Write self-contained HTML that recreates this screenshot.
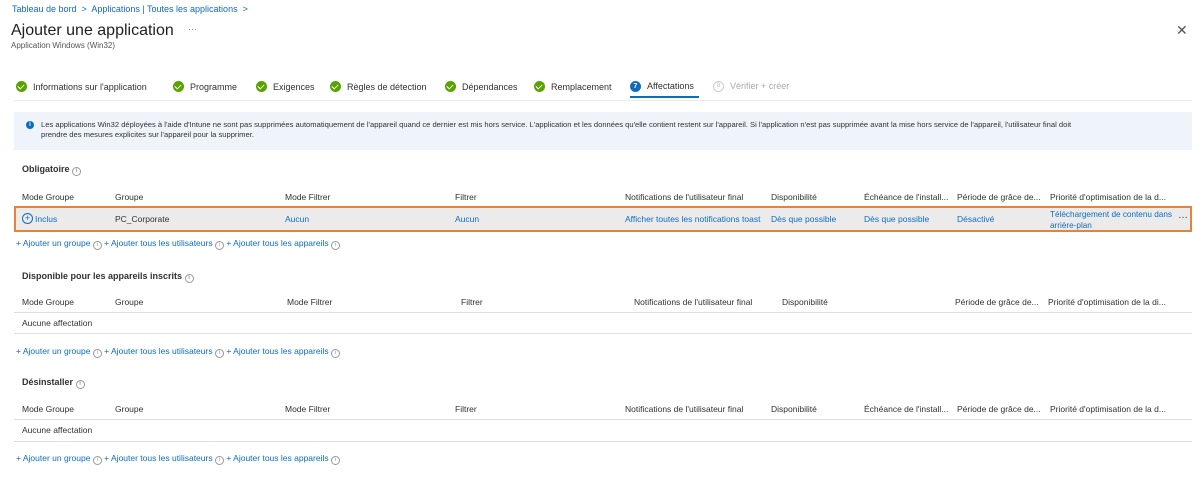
<!DOCTYPE html>
<html><head><meta charset="utf-8"><style>
body{margin:0;width:1200px;height:478px;background:#fff;font-family:"Liberation Sans",sans-serif;color:#323130;position:relative;overflow:hidden}
.a{position:absolute;white-space:nowrap}
.s{font-size:9px}
.hd{font-size:8.5px;color:#323130}
.l{color:#0f6cbd}
.ck{display:inline-block;width:11px;height:11px;border-radius:50%;background:#57a300;vertical-align:-2px;margin-right:6px;position:relative}
.ck:after{content:"";position:absolute;left:3px;top:2px;width:3px;height:5px;border:solid #fff;border-width:0 1.5px 1.5px 0;transform:rotate(45deg)}
.n{position:absolute;border-radius:50%;text-align:center;font-weight:bold}
.i{display:inline-block;width:7px;height:7px;border:1px solid #999;border-radius:50%;font-size:6px;line-height:7px;text-align:center;color:#999;vertical-align:0}
.hr{position:absolute;left:14px;width:1178px;height:1px;background:#e1dfdd}
</style></head><body>
<div class="a s l" style="left:12px;top:4px">Tableau de bord &nbsp;&gt;&nbsp; Applications | Toutes les applications &nbsp;&gt;</div>
<div class="a" style="left:11px;top:22px;font-size:16px;color:#201f1e">Ajouter une application</div>
<div class="a" style="left:188px;top:24px;font-size:9px;color:#888">···</div>
<div class="a" style="left:11px;top:41px;font-size:8px;color:#555">Application Windows (Win32)</div>
<div class="a" style="left:1176px;top:22px;font-size:14px;color:#555">✕</div>

<div class="a s" style="left:16px;top:81px"><span class="ck"></span>Informations sur l'application</div>
<div class="a s" style="left:173px;top:81px"><span class="ck"></span>Programme</div>
<div class="a s" style="left:256px;top:81px"><span class="ck"></span>Exigences</div>
<div class="a s" style="left:330px;top:81px"><span class="ck"></span>Règles de détection</div>
<div class="a s" style="left:445px;top:81px"><span class="ck"></span>Dépendances</div>
<div class="a s" style="left:534px;top:81px"><span class="ck"></span>Remplacement</div>
<div class="n" style="left:630px;top:81px;width:11px;height:11px;background:#0f6cbd;color:#fff;font-size:7px;line-height:11px">7</div>
<div class="a s" style="left:647px;top:81px">Affectations</div>
<div class="a" style="left:630px;top:96px;width:69px;height:2px;background:#0f6cbd"></div>
<div class="n" style="left:713px;top:81px;width:9px;height:9px;border:1px solid #ccc;color:#bbb;font-size:6px;line-height:9px;font-weight:normal">8</div>
<div class="a s" style="left:730px;top:81px;color:#aaa">Vérifier + créer</div>
<div class="hr" style="top:100px;background:#edebe9"></div>

<div class="a" style="left:14px;top:112px;width:1178px;height:38px;background:#eff4fb"></div>
<div class="a" style="left:26px;top:121px;width:8px;height:8px;border-radius:50%;background:#0f6cbd;color:#fff;font-size:6px;line-height:8px;text-align:center;font-weight:bold">i</div>
<div class="a" style="left:41px;top:120px;font-size:7.6px;line-height:10px;color:#323130">Les applications Win32 déployées à l'aide d'Intune ne sont pas supprimées automatiquement de l'appareil quand ce dernier est mis hors service. L'application et les données qu'elle contient restent sur l'appareil. Si l'application n'est pas supprimée avant la mise hors service de l'appareil, l'utilisateur final doit<br>prendre des mesures explicites sur l'appareil pour la supprimer.</div>

<div class="a" style="left:22px;top:164px;font-size:9px;font-weight:bold">Obligatoire <span class="i">i</span></div>
<div class="a hd" style="left:22px;top:192px">Mode Groupe</div>
<div class="a hd" style="left:115px;top:192px">Groupe</div>
<div class="a hd" style="left:285px;top:192px">Mode Filtrer</div>
<div class="a hd" style="left:455px;top:192px">Filtrer</div>
<div class="a hd" style="left:625px;top:192px">Notifications de l'utilisateur final</div>
<div class="a hd" style="left:771px;top:192px">Disponibilité</div>
<div class="a hd" style="left:864px;top:192px">Échéance de l'install...</div>
<div class="a hd" style="left:957px;top:192px">Période de grâce de...</div>
<div class="a hd" style="left:1050px;top:192px">Priorité d'optimisation de la d...</div>
<div class="a" style="left:14px;top:206px;width:1174px;height:22px;background:#ecebeb;border:2px solid #e8823a"></div>
<div class="n" style="left:22px;top:213px;width:9px;height:9px;border:1px solid #0f6cbd;color:#0f6cbd;font-size:9px;line-height:9px;font-weight:normal">+</div>
<div class="a hd l" style="left:35px;top:214px">Inclus</div>
<div class="a hd" style="left:115px;top:214px">PC_Corporate</div>
<div class="a hd l" style="left:285px;top:214px">Aucun</div>
<div class="a hd l" style="left:455px;top:214px">Aucun</div>
<div class="a hd l" style="left:625px;top:214px">Afficher toutes les notifications toast</div>
<div class="a hd l" style="left:771px;top:214px">Dès que possible</div>
<div class="a hd l" style="left:864px;top:214px">Dès que possible</div>
<div class="a hd l" style="left:957px;top:214px">Désactivé</div>
<div class="a hd l" style="left:1050px;top:209px;line-height:11px;height:21px;overflow:hidden;font-size:8.2px">Téléchargement de contenu dans<br>arrière-plan</div>
<div class="a" style="left:1178px;top:210px;font-size:10px;color:#333">…</div>
<div class="a hd l" style="left:16px;top:238px">+ Ajouter un groupe <span class="i">i</span> + Ajouter tous les utilisateurs <span class="i">i</span> + Ajouter tous les appareils <span class="i">i</span></div>

<div class="a" style="left:22px;top:271px;font-size:9px;font-weight:bold">Disponible pour les appareils inscrits <span class="i">i</span></div>
<div class="a hd" style="left:22px;top:297px">Mode Groupe</div>
<div class="a hd" style="left:115px;top:297px">Groupe</div>
<div class="a hd" style="left:287px;top:297px">Mode Filtrer</div>
<div class="a hd" style="left:461px;top:297px">Filtrer</div>
<div class="a hd" style="left:634px;top:297px">Notifications de l'utilisateur final</div>
<div class="a hd" style="left:782px;top:297px">Disponibilité</div>
<div class="a hd" style="left:955px;top:297px">Période de grâce de...</div>
<div class="a hd" style="left:1048px;top:297px">Priorité d'optimisation de la di...</div>
<div class="hr" style="top:312px"></div>
<div class="a hd" style="left:22px;top:318px">Aucune affectation</div>
<div class="hr" style="top:333px"></div>
<div class="a hd l" style="left:16px;top:346px">+ Ajouter un groupe <span class="i">i</span> + Ajouter tous les utilisateurs <span class="i">i</span> + Ajouter tous les appareils <span class="i">i</span></div>

<div class="a" style="left:22px;top:377px;font-size:9px;font-weight:bold">Désinstaller <span class="i">i</span></div>
<div class="a hd" style="left:22px;top:404px">Mode Groupe</div>
<div class="a hd" style="left:115px;top:404px">Groupe</div>
<div class="a hd" style="left:285px;top:404px">Mode Filtrer</div>
<div class="a hd" style="left:455px;top:404px">Filtrer</div>
<div class="a hd" style="left:625px;top:404px">Notifications de l'utilisateur final</div>
<div class="a hd" style="left:771px;top:404px">Disponibilité</div>
<div class="a hd" style="left:864px;top:404px">Échéance de l'install...</div>
<div class="a hd" style="left:957px;top:404px">Période de grâce de...</div>
<div class="a hd" style="left:1050px;top:404px">Priorité d'optimisation de la d...</div>
<div class="hr" style="top:419px"></div>
<div class="a hd" style="left:22px;top:425px">Aucune affectation</div>
<div class="hr" style="top:441px"></div>
<div class="a hd l" style="left:16px;top:453px">+ Ajouter un groupe <span class="i">i</span> + Ajouter tous les utilisateurs <span class="i">i</span> + Ajouter tous les appareils <span class="i">i</span></div>
</body></html>
